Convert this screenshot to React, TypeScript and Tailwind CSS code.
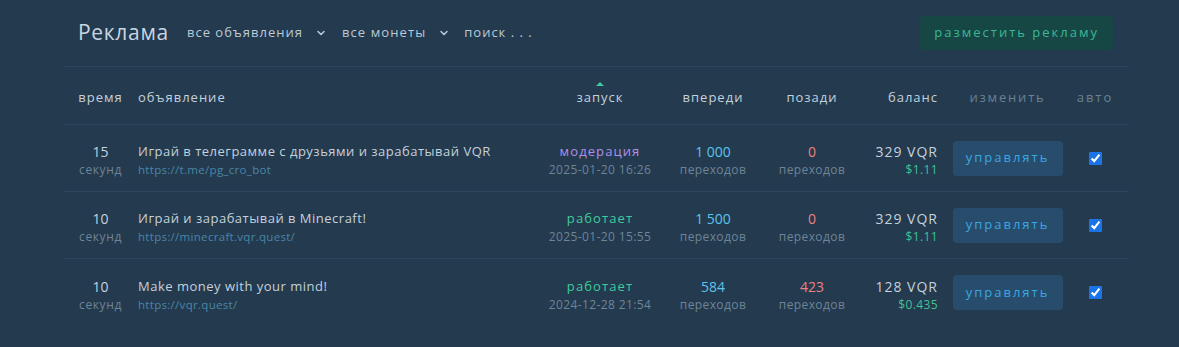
import { ChevronDown } from "lucide-react";

type Ad = {
  id: number;
  seconds: number;
  title: string;
  url: string;
  status: "модерация" | "работает";
  started: string;
  ahead: string;
  behind: string;
  balance: string;
  usd: string;
};

const ads: Ad[] = [
  {
    id: 1,
    seconds: 15,
    title: "Играй в телеграмме с друзьями и зарабатывай VQR",
    url: "https://t.me/pg_cro_bot",
    status: "модерация",
    started: "2025-01-20 16:26",
    ahead: "1 000",
    behind: "0",
    balance: "329 VQR",
    usd: "$1.11",
  },
  {
    id: 2,
    seconds: 10,
    title: "Играй и зарабатывай в Minecraft!",
    url: "https://minecraft.vqr.quest/",
    status: "работает",
    started: "2025-01-20 15:55",
    ahead: "1 500",
    behind: "0",
    balance: "329 VQR",
    usd: "$1.11",
  },
  {
    id: 3,
    seconds: 10,
    title: "Make money with your mind!",
    url: "https://vqr.quest/",
    status: "работает",
    started: "2024-12-28 21:54",
    ahead: "584",
    behind: "423",
    balance: "128 VQR",
    usd: "$0.435",
  },
];

const cols =
  "grid grid-cols-[75px_407px_110px_116px_82px_92px_125px_50px] items-center";

function App() {
  return (
    <div
      className="min-h-[347px] w-full bg-[#233a4f] text-[#c5d1dc]"
      style={{ fontFamily: '"Open Sans", "Noto Sans", sans-serif' }}
    >
      <div className="ml-[63px] w-[1065px]">
        {/* top bar */}
        <div className="flex h-[67px] items-center justify-between border-b border-[#2d465c] px-[15px]">
          <div className="flex items-center">
            <h1 className="text-[21px] tracking-[0.7px] text-[#c9d5e0]">
              Реклама
            </h1>
            <button className="ml-[18px] flex items-center text-[13px] tracking-[1px] text-[#bccad6]">
              все объявления
              <ChevronDown className="ml-[12px] h-3 w-3" strokeWidth={3} />
            </button>
            <button className="ml-[15px] flex items-center text-[13px] tracking-[1.1px] text-[#bccad6]">
              все монеты
              <ChevronDown className="ml-[12px] h-3 w-3" strokeWidth={3} />
            </button>
            <span className="ml-[14px] text-[13px] tracking-[1px] text-[#bccad6]">
              поиск . . .
            </span>
          </div>
          <button className="h-[34px] rounded-[4px] bg-[#164745] px-[14px] text-[13px] tracking-[2px] text-[#3ab795]">
            разместить рекламу
          </button>
        </div>

        {/* column headers */}
        <div
          className={`${cols} h-[58px] border-b border-[#2d465c] pt-[4px] text-[13px] tracking-[1px]`}
        >
          <div className="text-center">время</div>
          <div>объявление</div>
          <div className="relative text-center">
            <span className="absolute -top-[6px] left-1/2 h-0 w-0 -translate-x-1/2 border-x-[4px] border-b-[4px] border-x-transparent border-b-[#3fc9a3]" />
            запуск
          </div>
          <div className="text-center">впереди</div>
          <div className="text-center">позади</div>
          <div className="pr-[7px] text-right">баланс</div>
          <div className="text-center tracking-[1.8px] text-[#6b8192]">
            изменить
          </div>
          <div className="text-center tracking-[2px] text-[#6b8192]">авто</div>
        </div>

        {/* rows */}
        {ads.map((ad, i) => (
          <div
            key={ad.id}
            className={`${cols} h-[67px] ${
              i < ads.length - 1 ? "border-b border-[#2d465c]" : ""
            }`}
          >
            <div className="pt-[4px] text-center">
              <div className="text-[14px] leading-[19px] text-[#c5d1dc]">
                {ad.seconds}
              </div>
              <div className="text-[12px] leading-[17px] tracking-[0.6px] text-[#6f8496]">
                секунд
              </div>
            </div>
            <div className="pt-[4px]">
              <div className="text-[13px] leading-[19px] tracking-[0.5px] text-[#c5d1dc]">
                {ad.title}
              </div>
              <div className="text-[11.5px] leading-[17px] tracking-[0.3px] text-[#4a86a6]">
                {ad.url}
              </div>
            </div>
            <div className="pt-[4px] text-center">
              <div
                className={`text-[13px] leading-[19px] tracking-[1.1px] ${
                  ad.status === "модерация"
                    ? "text-[#b38ee6]"
                    : "text-[#3fcc9b]"
                }`}
              >
                {ad.status}
              </div>
              <div className="text-[12px] leading-[17px] tracking-[0.4px] text-[#6f8496]">
                {ad.started}
              </div>
            </div>
            <div className="pt-[4px] text-center">
              <div className="text-[14px] leading-[19px] text-[#5bc2ec]">
                {ad.ahead}
              </div>
              <div className="text-[12px] leading-[17px] tracking-[0.4px] text-[#6f8496]">
                переходов
              </div>
            </div>
            <div className="pt-[4px] text-center">
              <div className="text-[14px] leading-[19px] text-[#ee8080]">
                {ad.behind}
              </div>
              <div className="text-[12px] leading-[17px] tracking-[0.4px] text-[#6f8496]">
                переходов
              </div>
            </div>
            <div className="pt-[4px] pr-[7px] text-right">
              <div className="text-[14px] leading-[19px] tracking-[1px] text-[#c5d1dc]">
                {ad.balance}
              </div>
              <div className="text-[12px] leading-[17px] tracking-[0.4px] text-[#3fc294]">
                {ad.usd}
              </div>
            </div>
            <div className="flex justify-center">
              <button className="h-[35px] w-[110px] rounded-[4px] bg-[#284d6c] text-[13px] tracking-[2px] text-[#3aa6e2]">
                управлять
              </button>
            </div>
            <div className="flex justify-center">
              <input
                type="checkbox"
                defaultChecked
                className="h-[13px] w-[13px] accent-[#1a73e8]"
              />
            </div>
          </div>
        ))}
      </div>
    </div>
  );
}

export default App;
